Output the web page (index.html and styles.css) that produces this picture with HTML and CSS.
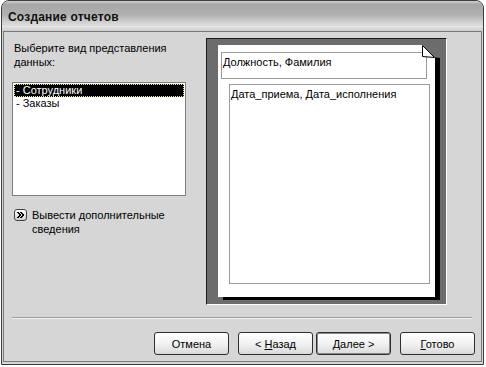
FILE: index.html
```html
<!DOCTYPE html>
<html lang="ru">
<head>
    <meta charset="UTF-8">
    <title>Создание отчетов</title>
    <link rel="stylesheet" href="styles.css">
</head>
<body>

    <div class="window">
        <div class="titlebar">Создание отчетов</div>
        <div class="client">
            <div class="main">
                <div class="left">
                    <p class="prompt">Выберите вид представления данных:</p>
                    <ul class="listbox">
                        <li class="selected">- Сотрудники</li>
                        <li>- Заказы</li>
                    </ul>
                    <div class="more">
                        <span class="more-btn">
                            <svg width="7" height="6" viewBox="0 0 7 6">
                                <path d="M0 0 L3 3 L0 6 M1 0 L4 3 L1 6 M3 0 L6 3 L3 6 M4 0 L7 3 L4 6" stroke="#000" stroke-width="1" fill="none"/>
                            </svg>
                        </span>
                        <span class="more-text">Вывести дополнительные сведения</span>
                    </div>
                </div>

                <div class="preview">
                    <div class="paper">
                        <svg class="fold" width="18" height="13" viewBox="0 0 18 13">
                            <polygon points="0.5,0 18,0 18,13 12.5,12.5" fill="#6c6c6c"/>
                            <polygon points="0.5,0.5 0.5,11.5 12.5,12.5" fill="#fff" stroke="#000" stroke-width="1"/>
                        </svg>
                        <div class="header-box">Должность, Фамилия</div>
                        <div class="body-box">Дата_приема, Дата_исполнения</div>
                    </div>
                </div>
            </div>

            <div class="separator"></div>

            <div class="buttons">
                <button class="btn">Отмена</button>
                <button class="btn">&lt; <u>Н</u>азад</button>
                <button class="btn default"><u>Д</u>алее &gt;</button>
                <button class="btn last"><u>Г</u>отово</button>
            </div>
        </div>
    </div>

</body>
</html>
```

FILE: styles.css
```css
body {
    margin: 0;
    padding: 0;
    background: #fff;
    font-family: "Liberation Sans", Arial, sans-serif;
    font-size: 11px;
    color: #000;
}

.window {
    box-sizing: border-box;
    width: 483px;
    height: 365px;
    margin-left: 1px;
    border: 1px solid #3c3c3c;
    border-radius: 8px 8px 0 0;
    background: #d6d6d6;
    overflow: hidden;
}

.titlebar {
    height: 30px;
    padding-left: 6px;
    line-height: 32px;
    font-size: 12px;
    font-weight: bold;
    letter-spacing: 0.2px;
    color: #111;
    background: linear-gradient(to bottom, #cfcfcf 0%, #a6a6a6 12%, #b0b0b0 45%, #e2e2e2 85%, #cccccc 100%);
}

.client {
    box-sizing: border-box;
    height: 331px;
    margin: 0 1px 1px 1px;
    padding: 6px 6px 0 8px;
    border: 1px solid #7a7a7a;
}

.main {
    display: flex;
    gap: 20px;
}

.left {
    width: 174px;
}

.prompt {
    margin: 3px 0 0 2px;
    line-height: 14px;
    width: 160px;
}

.listbox {
    box-sizing: border-box;
    height: 114px;
    margin: 13px 0 0 0;
    padding: 1px;
    list-style: none;
    background: #fff;
    border: 1px solid #7f7f7f;
}

.listbox li {
    height: 13px;
    line-height: 13px;
    padding-left: 2px;
}

.listbox .selected {
    background: #000;
    color: #fff;
    outline: 1px dotted #e8e8a0;
    outline-offset: -1px;
}

.more {
    display: flex;
    gap: 5px;
    margin-top: 12px;
    padding-left: 2px;
}

.more-btn {
    box-sizing: border-box;
    width: 13px;
    height: 12px;
    margin-top: 1px;
    display: flex;
    align-items: center;
    justify-content: center;
    border: 1px solid #444;
    border-radius: 3px;
    background: linear-gradient(#fff, #d0d0d0);
}

.more-text {
    line-height: 14px;
    width: 140px;
}

.preview {
    box-sizing: border-box;
    width: 241px;
    height: 267px;
    padding: 6px 0 0 11px;
    border: 1px solid;
    border-color: #1a1a1a #fff #fff #1a1a1a;
    background: #6c6c6c;
}

.paper {
    position: relative;
    box-sizing: border-box;
    width: 217px;
    height: 252px;
    padding: 7px 0 0 3px;
    background: #fff;
    box-shadow: 5px 3px 0 #000;
}

.fold {
    position: absolute;
    top: 0;
    right: -5px;
    display: block;
}

.header-box {
    box-sizing: border-box;
    width: 206px;
    height: 27px;
    padding: 2px 0 0 1px;
    border: 1px solid #9a9a9a;
    line-height: 14px;
}

.body-box {
    box-sizing: border-box;
    width: 201px;
    height: 200px;
    margin: 5px 0 0 8px;
    padding: 2px 0 0 1px;
    border: 1px solid #9a9a9a;
    line-height: 14px;
}

.separator {
    height: 0;
    margin: 12px 3px 0 0;
    border-top: 1px solid #9c9c9c;
    border-bottom: 1px solid #f4f4f4;
}

.buttons {
    display: flex;
    justify-content: flex-end;
    gap: 9px;
    margin-top: 13px;
}

.btn {
    box-sizing: border-box;
    width: 75px;
    height: 23px;
    padding: 0;
    font-family: inherit;
    font-size: 11px;
    color: #000;
    border: 1px solid #2e2e2e;
    border-radius: 3px;
    background: linear-gradient(to bottom, #ffffff 0%, #f2f2f2 50%, #dadada 100%);
}

.btn.default {
    margin-left: -6px;
    box-shadow: inset 0 0 0 1px #8a8a8a;
}
```
